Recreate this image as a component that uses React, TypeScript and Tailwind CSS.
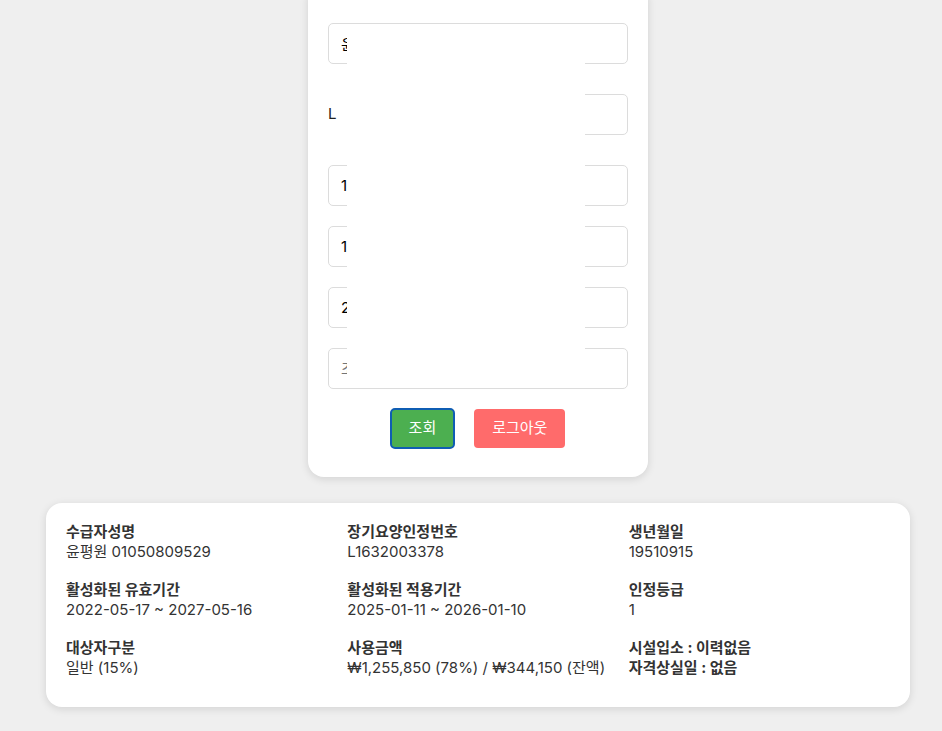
import React from 'react'

const FONT = "font-['Inter','Noto_Sans_CJK_KR',sans-serif]"

const INFO = [
  { label: '수급자성명', value: '윤평원 01050809529' },
  { label: '장기요양인정번호', value: 'L1632003378' },
  { label: '생년월일', value: '19510915' },
  { label: '활성화된 유효기간', value: '2022-05-17 ~ 2027-05-16' },
  { label: '활성화된 적용기간', value: '2025-01-11 ~ 2026-01-10' },
  { label: '인정등급', value: '1' },
  { label: '대상자구분', value: '일반 (15%)' },
  { label: '사용금액', value: '₩1,255,850 (78%) / ₩344,150 (잔액)' },
]

function Field({ value, placeholder, className = '' }: { value?: string; placeholder?: string; className?: string }) {
  return (
    <input
      readOnly
      value={value}
      placeholder={placeholder}
      className={`block w-full h-[41px] px-3 text-[15px] text-black placeholder:text-[#757575] bg-white border border-[#dcdcdc] rounded-[5px] outline-none ${className}`}
    />
  )
}

export default function App() {
  return (
    <div className={`min-h-[731px] bg-[#efefef] pl-[46px] pr-[32px] pb-6 ${FONT}`}>
      {/* search card */}
      <div className="relative w-[340px] mx-auto -mt-4 pt-[39px] pb-[29px] px-5 bg-white rounded-2xl shadow-[0_2px_8px_rgba(0,0,0,0.12)]">
        <Field value="윤평원" className="mb-[30px]" />

        {/* row 2: left border hidden, text sits on the edge */}
        <div className="relative mb-[30px]">
          <Field value="" />
          <div className="absolute -left-1 top-[-2px] w-[24px] h-[45px] bg-white" />
          <span className="absolute left-0 top-0 h-[41px] flex items-center text-[15px] text-[#222]">L</span>
        </div>

        <Field value="19510915" className="mb-5" />
        <Field value="1" className="mb-5" />
        <Field value="2022-05-17" className="mb-5" />
        <Field placeholder="조회기간" className="mb-5" />

        <div className="flex justify-center gap-5">
          <button className="h-[39px] px-[18px] rounded-[4px] bg-[#4caf50] text-white text-[15px] outline-2 outline-[#0f5db3] -outline-offset-1">
            조회
          </button>
          <button className="h-[39px] px-[18px] rounded-[4px] bg-[#ff6b6b] text-white text-[15px]">
            로그아웃
          </button>
        </div>

        {/* white popup layer over the fields */}
        <div className="absolute left-[39px] top-[42px] w-[238px] h-[360px] bg-white" />
      </div>

      {/* result card */}
      <div className="mt-[26px] bg-white rounded-2xl shadow-[0_2px_8px_rgba(0,0,0,0.12)] px-5 pt-[19px] pb-[30px] text-[15px] leading-[19.5px] text-[#333]">
        <div className="grid grid-cols-3 gap-x-5 gap-y-[19px]">
          {INFO.map(({ label, value }) => (
            <div key={label}>
              <div className="font-bold">{label}</div>
              <div>{value}</div>
            </div>
          ))}
          <div className="font-bold">
            <div>시설입소 : 이력없음</div>
            <div>자격상실일 : 없음</div>
          </div>
        </div>
      </div>
    </div>
  )
}
